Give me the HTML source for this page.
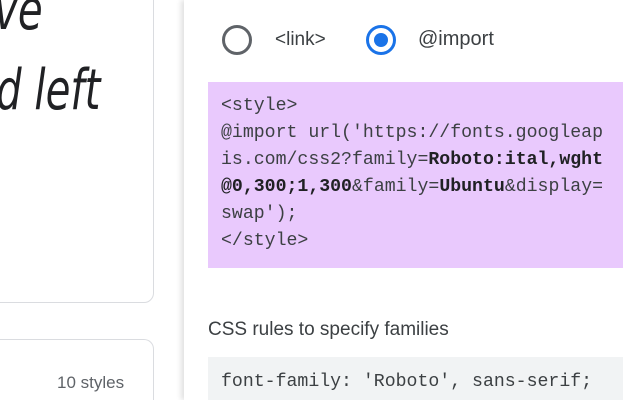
<html><head><style>
html,body{margin:0;width:640px;height:400px;overflow:hidden}
body{background:#fff;position:relative;font-family:"Liberation Sans",sans-serif}
.card{position:absolute;border:1px solid #dadce0;border-radius:10px;background:#fff}
.hw{position:absolute;font-family:"DejaVu Sans",sans-serif;font-style:italic;font-weight:200;font-size:56px;color:#202124;transform:scaleX(.72);transform-origin:left}
.panel{position:absolute;left:184px;top:0;width:456px;height:400px;background:#fff;box-shadow:-3px 0 5px rgba(0,0,0,.12)}
.code{position:absolute;left:208px;top:82px;width:415px;height:186px;background:#e9c9fd}
.mono{font-family:"Liberation Mono",monospace;font-size:18.2px;line-height:27px;color:#3c4043;white-space:pre}
b{color:#202124}
</style></head><body>
<div class="card" style="left:-20px;top:-20px;width:172px;height:321px"></div>
<div class="hw" style="left:-6px;top:-22px">ve</div>
<div class="hw" style="left:-4px;top:58px">d left</div>
<div class="card" style="left:-20px;top:339px;width:172px;height:70px;border-bottom:none;border-radius:10px 10px 0 0"></div>
<div style="position:absolute;left:57px;top:373px;font-size:17px;color:#5f6368">10 styles</div>
<div class="panel"></div>
<div style="position:absolute;left:222px;top:25px;width:30px;height:30px;border:3px solid #5f6368;border-radius:50%;box-sizing:border-box"></div>
<div style="position:absolute;left:275px;top:29px;font-size:19px;color:#3c4043">&lt;link&gt;</div>
<div style="position:absolute;left:366px;top:25px;width:30px;height:30px;border:3px solid #1a73e8;border-radius:50%;box-sizing:border-box"><div style="margin:5px;width:14px;height:14px;border-radius:50%;background:#1a73e8"></div></div>
<div style="position:absolute;left:418px;top:28px;font-size:20px;color:#3c4043">@import</div>
<div class="code"></div>
<div class="mono" style="position:absolute;left:221px;top:93px">&lt;style&gt;
@import url('https://fonts.googleap
is.com/css2?family=<b>Roboto:ital,wght</b>
<b>@0,300;1,300</b>&amp;family=<b>Ubuntu</b>&amp;display=
swap');
&lt;/style&gt;</div>
<div style="position:absolute;left:208px;top:319px;font-size:19px;color:#3c4043">CSS rules to specify families</div>
<div style="position:absolute;left:208px;top:357px;width:415px;height:43px;background:#f1f3f4"></div>
<div class="mono" style="position:absolute;left:221px;top:370px;line-height:24px">font-family: 'Roboto', sans-serif;</div>
</body></html>
